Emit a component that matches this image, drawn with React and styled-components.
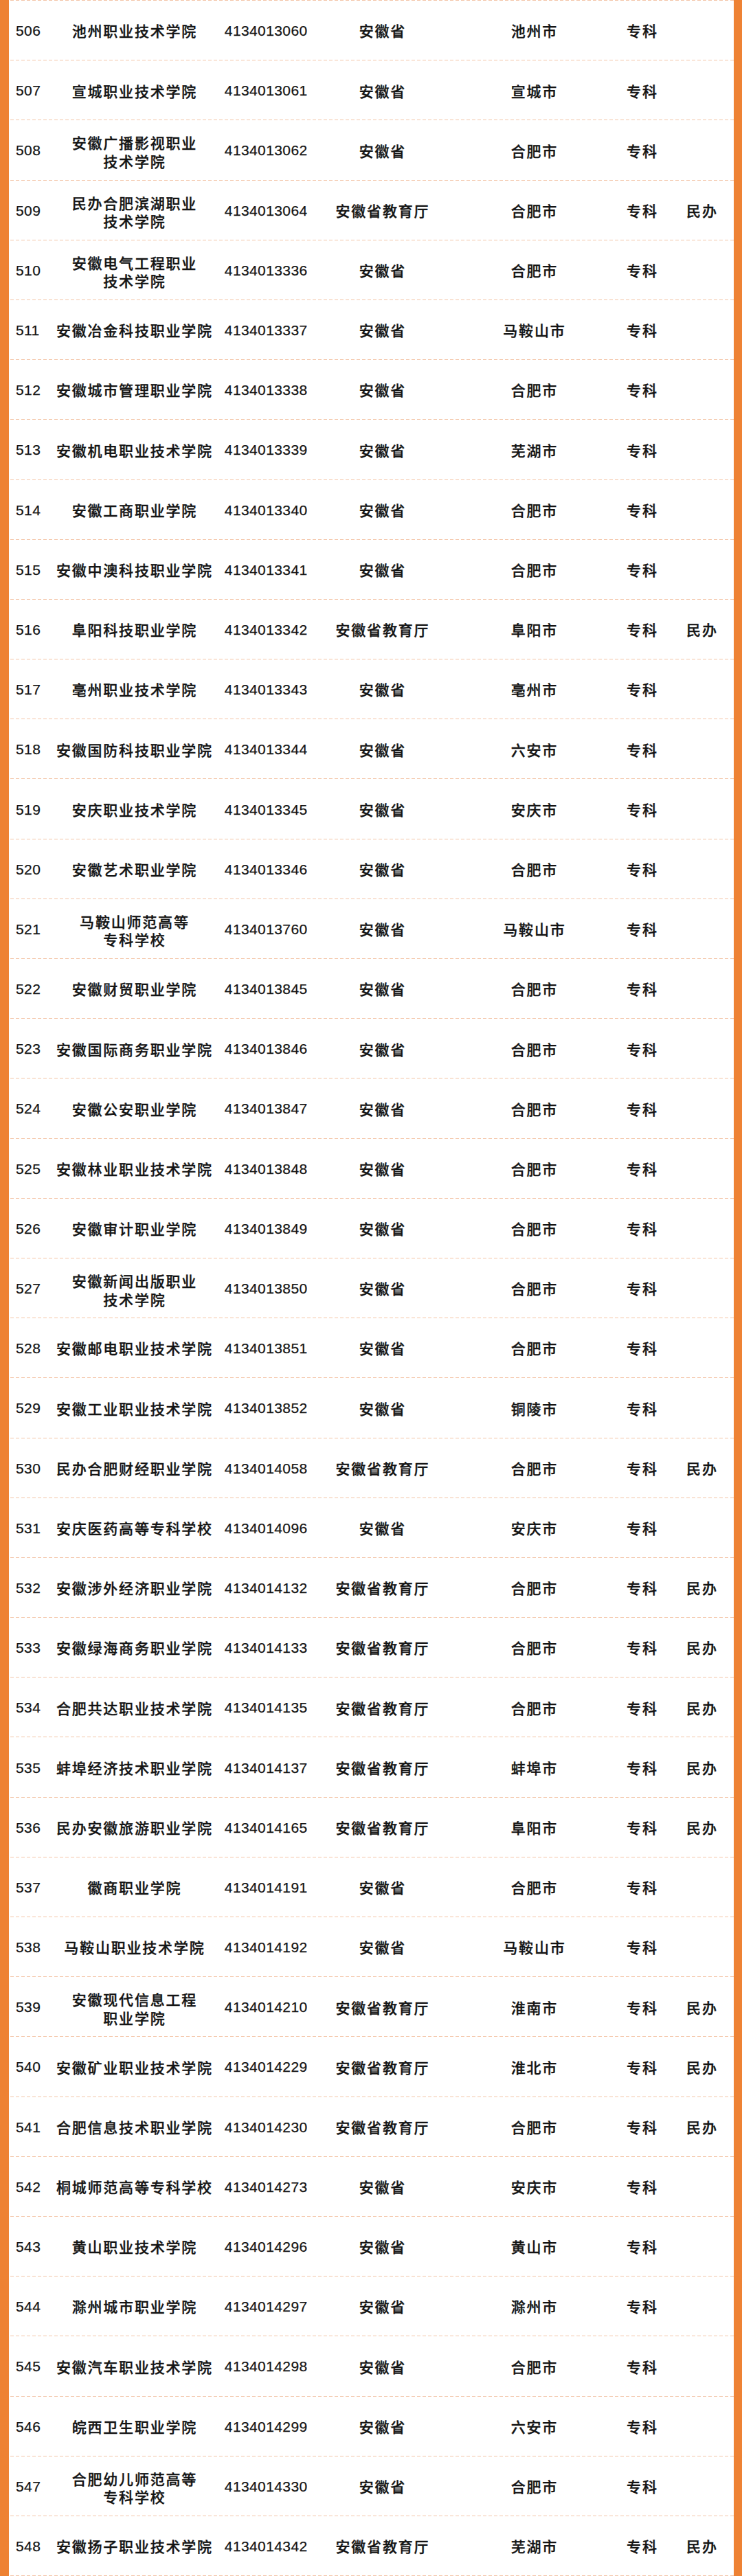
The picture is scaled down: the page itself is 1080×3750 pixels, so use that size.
import React from "react";
import styled, { createGlobalStyle } from "styled-components";

const GlobalStyle = createGlobalStyle`
  html, body {
    margin: 0;
    padding: 0;
    background: #ffffff;
  }
  body {
    font-family: "Noto Sans CJK SC", "Liberation Sans", sans-serif;
    color: #141414;
  }
`;

const rows = [
  ["506", "池州职业技术学院", "4134013060", "安徽省", "池州市", "专科", ""],
  ["507", "宣城职业技术学院", "4134013061", "安徽省", "宣城市", "专科", ""],
  ["508", "安徽广播影视职业|技术学院", "4134013062", "安徽省", "合肥市", "专科", ""],
  ["509", "民办合肥滨湖职业|技术学院", "4134013064", "安徽省教育厅", "合肥市", "专科", "民办"],
  ["510", "安徽电气工程职业|技术学院", "4134013336", "安徽省", "合肥市", "专科", ""],
  ["511", "安徽冶金科技职业学院", "4134013337", "安徽省", "马鞍山市", "专科", ""],
  ["512", "安徽城市管理职业学院", "4134013338", "安徽省", "合肥市", "专科", ""],
  ["513", "安徽机电职业技术学院", "4134013339", "安徽省", "芜湖市", "专科", ""],
  ["514", "安徽工商职业学院", "4134013340", "安徽省", "合肥市", "专科", ""],
  ["515", "安徽中澳科技职业学院", "4134013341", "安徽省", "合肥市", "专科", ""],
  ["516", "阜阳科技职业学院", "4134013342", "安徽省教育厅", "阜阳市", "专科", "民办"],
  ["517", "亳州职业技术学院", "4134013343", "安徽省", "亳州市", "专科", ""],
  ["518", "安徽国防科技职业学院", "4134013344", "安徽省", "六安市", "专科", ""],
  ["519", "安庆职业技术学院", "4134013345", "安徽省", "安庆市", "专科", ""],
  ["520", "安徽艺术职业学院", "4134013346", "安徽省", "合肥市", "专科", ""],
  ["521", "马鞍山师范高等|专科学校", "4134013760", "安徽省", "马鞍山市", "专科", ""],
  ["522", "安徽财贸职业学院", "4134013845", "安徽省", "合肥市", "专科", ""],
  ["523", "安徽国际商务职业学院", "4134013846", "安徽省", "合肥市", "专科", ""],
  ["524", "安徽公安职业学院", "4134013847", "安徽省", "合肥市", "专科", ""],
  ["525", "安徽林业职业技术学院", "4134013848", "安徽省", "合肥市", "专科", ""],
  ["526", "安徽审计职业学院", "4134013849", "安徽省", "合肥市", "专科", ""],
  ["527", "安徽新闻出版职业|技术学院", "4134013850", "安徽省", "合肥市", "专科", ""],
  ["528", "安徽邮电职业技术学院", "4134013851", "安徽省", "合肥市", "专科", ""],
  ["529", "安徽工业职业技术学院", "4134013852", "安徽省", "铜陵市", "专科", ""],
  ["530", "民办合肥财经职业学院", "4134014058", "安徽省教育厅", "合肥市", "专科", "民办"],
  ["531", "安庆医药高等专科学校", "4134014096", "安徽省", "安庆市", "专科", ""],
  ["532", "安徽涉外经济职业学院", "4134014132", "安徽省教育厅", "合肥市", "专科", "民办"],
  ["533", "安徽绿海商务职业学院", "4134014133", "安徽省教育厅", "合肥市", "专科", "民办"],
  ["534", "合肥共达职业技术学院", "4134014135", "安徽省教育厅", "合肥市", "专科", "民办"],
  ["535", "蚌埠经济技术职业学院", "4134014137", "安徽省教育厅", "蚌埠市", "专科", "民办"],
  ["536", "民办安徽旅游职业学院", "4134014165", "安徽省教育厅", "阜阳市", "专科", "民办"],
  ["537", "徽商职业学院", "4134014191", "安徽省", "合肥市", "专科", ""],
  ["538", "马鞍山职业技术学院", "4134014192", "安徽省", "马鞍山市", "专科", ""],
  ["539", "安徽现代信息工程|职业学院", "4134014210", "安徽省教育厅", "淮南市", "专科", "民办"],
  ["540", "安徽矿业职业技术学院", "4134014229", "安徽省教育厅", "淮北市", "专科", "民办"],
  ["541", "合肥信息技术职业学院", "4134014230", "安徽省教育厅", "合肥市", "专科", "民办"],
  ["542", "桐城师范高等专科学校", "4134014273", "安徽省", "安庆市", "专科", ""],
  ["543", "黄山职业技术学院", "4134014296", "安徽省", "黄山市", "专科", ""],
  ["544", "滁州城市职业学院", "4134014297", "安徽省", "滁州市", "专科", ""],
  ["545", "安徽汽车职业技术学院", "4134014298", "安徽省", "合肥市", "专科", ""],
  ["546", "皖西卫生职业学院", "4134014299", "安徽省", "六安市", "专科", ""],
  ["547", "合肥幼儿师范高等|专科学校", "4134014330", "安徽省", "合肥市", "专科", ""],
  ["548", "安徽扬子职业技术学院", "4134014342", "安徽省教育厅", "芜湖市", "专科", "民办"],
];

const ORANGE = "#ee8234";
const DASH = "#f3c4a6";

const Frame = styled.div`
  box-sizing: border-box;
  width: 1080px;
  border-left: 13px solid ${ORANGE};
  border-right: 12px solid ${ORANGE};
  background: #ffffff;
`;

const Table = styled.div`
  display: flex;
  flex-direction: column;
  padding-top: 1px;
  background-image: linear-gradient(to right, ${DASH} 62%, transparent 62%);
  background-size: 8px 1px;
  background-repeat: repeat-x;
  background-position: 2px 0;
`;

const Row = styled.div`
  box-sizing: border-box;
  height: 87.2px;
  display: grid;
  grid-template-columns: 52px 260px 124px 214px 228px 86px 88px 3px;
  align-items: center;
  padding-bottom: 1px;
  background-image: linear-gradient(to right, ${DASH} 62%, transparent 62%);
  background-size: 8px 1px;
  background-repeat: repeat-x;
  background-position: 2px bottom;
`;

const NumCell = styled.div`
  font-family: "Liberation Sans", Arial, sans-serif;
  font-size: 21px;
  letter-spacing: 0.4px;
  color: #141414;
  -webkit-text-stroke: 0.25px #141414;
  text-align: ${(p) => (p.$left ? "left" : "center")};
  padding-left: ${(p) => (p.$left ? "10px" : "0.4px")};
  padding-top: 2px;
`;

const TextCell = styled.div`
  font-family: "Noto Sans CJK SC", "Liberation Sans", sans-serif;
  font-size: 21px;
  font-weight: 500;
  letter-spacing: 1.8px;
  line-height: 26.5px;
  color: #141414;
  -webkit-text-stroke: 0.35px #141414;
  text-align: center;
  white-space: nowrap;
  padding-left: 1.8px;
  padding-top: ${(p) => (p.$multi ? "5px" : "1px")};
`;

function Name({ value }) {
  const parts = value.split("|");
  return (
    <TextCell $multi={parts.length > 1}>
      {parts.map((p, i) => (
        <React.Fragment key={i}>
          {i > 0 && <br />}
          {p}
        </React.Fragment>
      ))}
    </TextCell>
  );
}

export default function App() {
  return (
    <>
      <GlobalStyle />
      <Frame>
        <Table>
          {rows.map((r) => (
            <Row key={r[0]}>
              <NumCell $left>{r[0]}</NumCell>
              <Name value={r[1]} />
              <NumCell>{r[2]}</NumCell>
              <TextCell>{r[3]}</TextCell>
              <TextCell>{r[4]}</TextCell>
              <TextCell>{r[5]}</TextCell>
              <TextCell>{r[6]}</TextCell>
              <span />
            </Row>
          ))}
        </Table>
      </Frame>
    </>
  );
}
